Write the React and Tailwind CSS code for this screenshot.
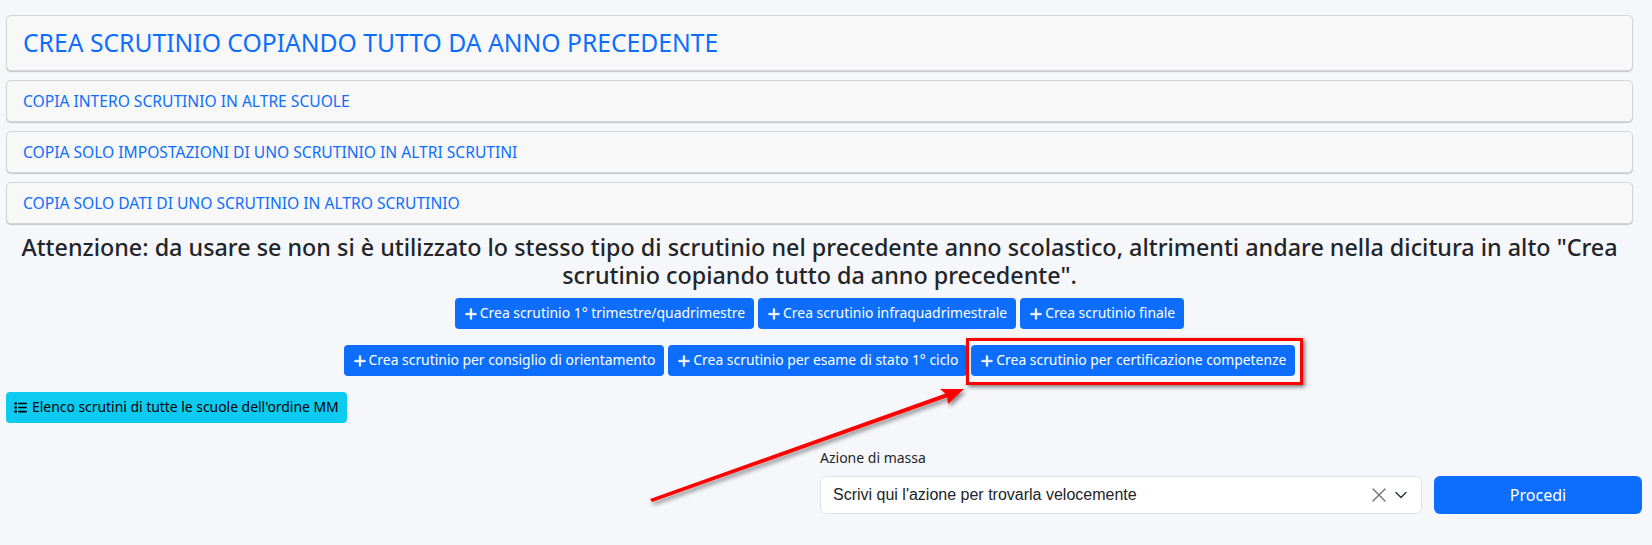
import { X, ChevronDown } from "lucide-react";
import { FaPlus, FaList } from "react-icons/fa6";

function Card({ big, children }) {
  return (
    <div className={`rounded-[5px] border border-[#d4d5d8] bg-[#f8f8f9] shadow-[0_1px_1px_rgba(0,0,0,0.2)] flex items-center px-[16px] text-[#0d6efd] ${big ? "h-[56px] text-[24.7px]" : "h-[42px] text-[15.6px] pt-[1px]"}`}>
      {children}
    </div>
  );
}

function Btn({ children }) {
  return (
    <button className="h-[31px] rounded-[4px] bg-[#0d6efd] text-white text-[13.9px] pl-[9px] pr-[9px] flex items-center gap-[2px] whitespace-nowrap">
      <FaPlus size={14} stroke="currentColor" strokeWidth={14} />
      {children}
    </button>
  );
}

export default function App() {
  return (
    <div className="relative min-h-[545px] bg-[#f6f7fb] pl-[6px] pr-[19px] pt-[15px] font-['Noto_Sans',sans-serif] text-[#212529]">
      <div className="flex flex-col gap-[9px]">
        <Card big>CREA SCRUTINIO COPIANDO TUTTO DA ANNO PRECEDENTE</Card>
        <Card>COPIA INTERO SCRUTINIO IN ALTRE SCUOLE</Card>
        <Card>COPIA SOLO IMPOSTAZIONI DI UNO SCRUTINIO IN ALTRI SCRUTINI</Card>
        <Card>COPIA SOLO DATI DI UNO SCRUTINIO IN ALTRO SCRUTINIO</Card>
      </div>
      <h4 className="text-center text-[23.33px] font-medium leading-[28px] mt-[9px]">
        Attenzione: da usare se non si è utilizzato lo stesso tipo di scrutinio nel precedente anno scolastico, altrimenti andare nella dicitura in alto "Crea scrutinio copiando tutto da anno precedente".
      </h4>
      <div className="flex justify-center gap-[4px] mt-[9px]">
        <Btn>Crea scrutinio 1° trimestre/quadrimestre</Btn>
        <Btn>Crea scrutinio infraquadrimestrale</Btn>
        <Btn>Crea scrutinio finale</Btn>
      </div>
      <div className="flex justify-center gap-[4px] mt-[16px]">
        <Btn>Crea scrutinio per consiglio di orientamento</Btn>
        <Btn>Crea scrutinio per esame di stato 1° ciclo</Btn>
        <div className="relative">
          <Btn>Crea scrutinio per certificazione competenze</Btn>
          <div className="absolute left-[-5px] right-[-8px] top-[-7px] bottom-[-9px] border-[3px] border-[#ff0000] shadow-[2px_2px_4px_rgba(0,0,0,0.5)]" />
        </div>
      </div>
      <div className="mt-[16px]">
        <button className="h-[31px] rounded-[4px] bg-[#0dcaf0] text-black text-[13.9px] pl-[8px] pr-[8px] inline-flex items-center gap-[5px] whitespace-nowrap">
          <FaList size={13} />
          Elenco scrutini di tutte le scuole dell'ordine MM
        </button>
      </div>
      <div className="flex mt-[24px] mr-[-9px] pl-[814px]">
        <div className="flex-1">
          <div className="text-[14px] leading-[21px] mb-[8px]">Azione di massa</div>
          <div className="h-[38px] rounded-[6px] border border-[#dee2e6] bg-white flex items-center pl-[12px] pr-[10px] font-['Liberation_Sans',sans-serif] text-[16px]">
            <span className="flex-1">Scrivi qui l'azione per trovarla velocemente</span>
            <X size={24} strokeWidth={1.4} className="text-[#777]" />
            <ChevronDown size={20} strokeWidth={1.8} className="text-[#343a40]" />
          </div>
        </div>
        <button className="self-end ml-[12px] w-[208px] h-[38px] rounded-[6px] bg-[#0d6efd] text-white text-[16px]">Procedi</button>
      </div>
      <svg className="absolute left-0 top-0 pointer-events-none" width="1652" height="545">
        <defs>
          <filter id="s" x="-10%" y="-30%" width="120%" height="160%">
            <feDropShadow dx="2" dy="3" stdDeviation="2" floodColor="#000" floodOpacity="0.45" />
          </filter>
        </defs>
        <g filter="url(#s)" fill="#ff0000">
          <path d="M652 502 L948 397 L947 393 L650 499 Z" />
          <path d="M964 389 L940 389 L947 395 L948 404 Z" />
        </g>
      </svg>
    </div>
  );
}
